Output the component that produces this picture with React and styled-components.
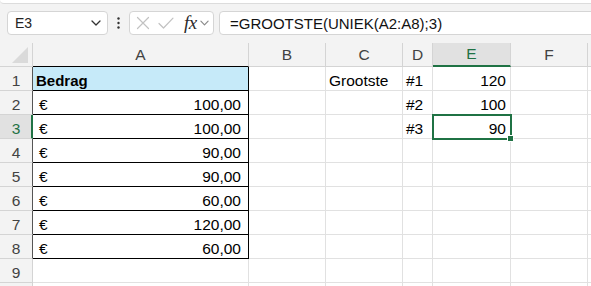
import React from 'react';
import styled, { createGlobalStyle, css } from 'styled-components';

const GREEN = '#1f7244';
const GRID = '#e1e1e1';
const HEAD_LINE = '#d4d4d4';
const BG = '#f3f3f3';

const Global = createGlobalStyle`
  html, body { margin: 0; padding: 0; background: ${BG}; overflow: hidden; }
  body { font-family: "Liberation Sans", Arial, sans-serif; }
  #root { width: 591px; height: 286px; overflow: hidden; }
`;

const Page = styled.div`
  display: flex;
  flex-direction: column;
  height: 286px;
  background: ${BG};
`;

const RibbonEdge = styled.div`
  flex: none;
  height: 3px;
  background: #fff;
  border-bottom: 1px solid #dcdcdc;
  border-bottom-left-radius: 6px;
`;

const FormulaBar = styled.div`
  flex: none;
  display: flex;
  align-items: center;
  height: 24px;
  margin: 7px 0 8px 7px;
`;

const Box = styled.div`
  box-sizing: border-box;
  height: 24px;
  background: #fff;
  border: 1px solid #d5d5d5;
  border-radius: 4px;
  display: flex;
  align-items: center;
`;

const NameBox = styled(Box)`
  width: 101px;
  padding: 0 6px 0 7px;
  justify-content: space-between;
  font-size: 14px;
  color: #242424;
`;

const Kebab = styled.div`
  width: 21px;
  display: flex;
  justify-content: center;
`;

const FxBox = styled(Box)`
  width: 85px;
  padding-left: 5px;
`;

const FxGlyph = styled.span`
  font-family: "Liberation Serif", "DejaVu Serif", serif;
  font-style: italic;
  font-size: 19px;
  color: #2b2b2b;
  margin-left: 10px;
  line-height: 18px;
  letter-spacing: -0.5px;
`;

const IconSlot = styled.span`
  display: flex;
  margin-left: ${(p) => p.$ml || 0}px;
`;

const FormulaInput = styled(Box)`
  flex: 1;
  margin-left: 5px;
  margin-right: -10px;
  padding-left: 10px;
  border-top-right-radius: 0;
  border-bottom-right-radius: 0;
  font-size: 15px;
  color: #111;
`;

const Sheet = styled.div`
  flex: 1;
  display: grid;
  grid-template-columns: 33px 216px 77px 77px 30px 78px 77px 1fr;
  grid-auto-rows: 24px;
  overflow: hidden;
`;

const Corner = styled.div`
  box-sizing: border-box;
  position: relative;
  background: ${BG};
  border-right: 1px solid ${HEAD_LINE};
  border-bottom: 1px solid ${HEAD_LINE};
`;

const ColHead = styled.div`
  box-sizing: border-box;
  background: ${BG};
  border-right: 1px solid ${HEAD_LINE};
  border-bottom: 1px solid ${(p) => (p.$tableTop ? '#000' : HEAD_LINE)};
  display: flex;
  align-items: center;
  justify-content: center;
  font-size: 15.5px;
  color: #424242;
  ${(p) =>
    p.$selected &&
    css`
      background: #e1e1e1;
      color: ${GREEN};
      border-bottom: 2px solid ${GREEN};
    `}
`;

const RowHead = styled.div`
  box-sizing: border-box;
  background: ${BG};
  border-right: 1px solid ${(p) => (p.$tableEdge ? '#555' : HEAD_LINE)};
  border-bottom: 1px solid ${HEAD_LINE};
  display: flex;
  align-items: flex-end;
  justify-content: center;
  padding-bottom: 1px;
  font-size: 15.5px;
  line-height: 17px;
  color: #424242;
  ${(p) =>
    p.$selected &&
    css`
      background: #e1e1e1;
      color: ${GREEN};
      border-right: 2px solid ${GREEN};
      padding-left: 1px;
    `}
`;

const Cell = styled.div`
  box-sizing: border-box;
  position: relative;
  background: #fff;
  border-right: 1px solid ${GRID};
  border-bottom: 1px solid ${GRID};
  display: flex;
  align-items: flex-end;
  justify-content: ${(p) =>
    p.$align === 'right' ? 'flex-end' : p.$align === 'split' ? 'space-between' : 'flex-start'};
  padding: 0 ${(p) => p.$padR}px 1px ${(p) => p.$padL}px;
  font-size: 15.5px;
  line-height: 17px;
  color: #000;
  white-space: nowrap;
  ${(p) =>
    p.$table &&
    css`
      border-right-color: #000;
      border-bottom-color: #000;
    `}
  ${(p) => p.$fill && css`background: ${p.$fill};`}
  ${(p) => p.$bold && css`font-weight: bold; font-size: 15px;`}
  ${(p) =>
    p.$active &&
    css`
      z-index: 2;
      outline: 2px solid ${GREEN};
      outline-offset: -1px;
    `}
`;

const FillHandle = styled.span`
  position: absolute;
  right: -4px;
  bottom: -4px;
  width: 5px;
  height: 5px;
  background: ${GREEN};
  border: 1px solid #fff;
  z-index: 3;
`;

const Triangle = () => (
  <svg width="17" height="17" viewBox="0 0 17 17" style={{ position: 'absolute', left: 12, top: 4 }}>
    <polygon points="16,0 16,16 0,16" fill="#dadada" />
  </svg>
);

const Chevron = ({ color = '#333', w = 10, h = 6 }) => (
  <svg width={w} height={h} viewBox="0 0 10 6">
    <path d="M1 1 L5 5 L9 1" fill="none" stroke={color} strokeWidth="1.3" strokeLinecap="round" strokeLinejoin="round" />
  </svg>
);

const Dots = () => (
  <svg width="3" height="12" viewBox="0 0 3 12">
    <circle cx="1.5" cy="1.5" r="1.2" fill="#333" />
    <circle cx="1.5" cy="6" r="1.2" fill="#333" />
    <circle cx="1.5" cy="10.5" r="1.2" fill="#333" />
  </svg>
);

const CrossIcon = () => (
  <svg width="14" height="14" viewBox="0 0 14 14">
    <path d="M1.5 1.5 L12.5 12.5 M12.5 1.5 L1.5 12.5" stroke="#c2c2c2" strokeWidth="1.2" strokeLinecap="round" />
  </svg>
);

const CheckIcon = () => (
  <svg width="16" height="12" viewBox="0 0 16 12">
    <path d="M1 6.5 L5.5 11 L15 1.2" fill="none" stroke="#c2c2c2" strokeWidth="1.2" strokeLinecap="round" strokeLinejoin="round" />
  </svg>
);

const COLS = ['A', 'B', 'C', 'D', 'E', 'F', ''];

const ROWS = [
  { A: { head: 'Bedrag' }, C: 'Grootste', D: '#1', E: '120' },
  { A: { cur: '€', val: '100,00' }, D: '#2', E: '100' },
  { A: { cur: '€', val: '100,00' }, D: '#3', E: '90' },
  { A: { cur: '€', val: '90,00' } },
  { A: { cur: '€', val: '90,00' } },
  { A: { cur: '€', val: '60,00' } },
  { A: { cur: '€', val: '120,00' } },
  { A: { cur: '€', val: '60,00' } },
  {},
  { hideLabel: true },
];

const SELECTED_ROW = 3;
const SELECTED_COL = 'E';

function renderCell(row, col, rowIdx) {
  const key = `${col}${rowIdx}`;
  const active = col === SELECTED_COL && rowIdx === SELECTED_ROW;
  if (col === 'A' && row.A) {
    if (row.A.head) {
      return (
        <Cell key={key} $table $fill="#c6eaf9" $bold $padL={3} $padR={3}>
          {row.A.head}
        </Cell>
      );
    }
    return (
      <Cell key={key} $table $align="split" $padL={6} $padR={7}>
        <span>{row.A.cur}</span>
        <span>{row.A.val}</span>
      </Cell>
    );
  }
  const value = col ? row[col] : undefined;
  const right = col === 'E';
  return (
    <Cell key={key} $align={right ? 'right' : 'left'} $padL={3} $padR={4} $active={active}>
      {value}
      {active && <FillHandle />}
    </Cell>
  );
}

export default function App() {
  return (
    <>
      <Global />
      <Page>
        <RibbonEdge />
        <FormulaBar>
          <NameBox>
            <span>E3</span>
            <Chevron />
          </NameBox>
          <Kebab>
            <Dots />
          </Kebab>
          <FxBox>
            <IconSlot $ml={1}>
              <CrossIcon />
            </IconSlot>
            <IconSlot $ml={8}>
              <CheckIcon />
            </IconSlot>
            <FxGlyph>fx</FxGlyph>
            <IconSlot $ml={3}>
              <Chevron color="#8a8a8a" w={9} h={6} />
            </IconSlot>
          </FxBox>
          <FormulaInput>=GROOTSTE(UNIEK(A2:A8);3)</FormulaInput>
        </FormulaBar>
        <Sheet>
          <Corner>
            <Triangle />
          </Corner>
          {COLS.map((c, i) => (
            <ColHead key={`h${i}`} $selected={c === SELECTED_COL} $tableTop={c === 'A'}>
              {c}
            </ColHead>
          ))}
          {ROWS.map((row, r) => {
            const rowIdx = r + 1;
            return (
              <React.Fragment key={`r${rowIdx}`}>
                <RowHead $selected={rowIdx === SELECTED_ROW} $tableEdge={!!row.A}>
                  {row.hideLabel ? null : rowIdx}
                </RowHead>
                {COLS.map((c) => renderCell(row, c, rowIdx))}
              </React.Fragment>
            );
          })}
        </Sheet>
      </Page>
    </>
  );
}
